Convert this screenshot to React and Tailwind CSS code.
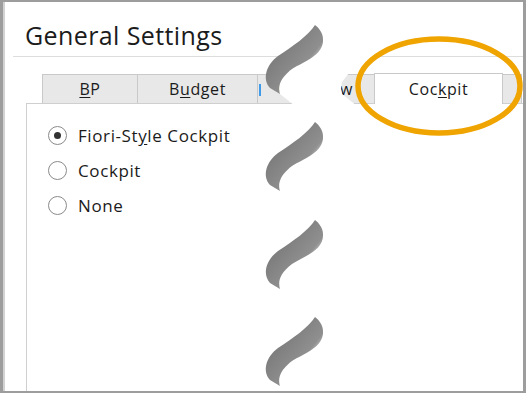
import React from 'react';

const font = { fontFamily: '"Open Sans", "Noto Sans", Arial, sans-serif' };

const tabs = [
  { label: 'BP', u: 0, w: 'w-[96px]' },
  { label: 'Budget', u: 1, w: 'w-[121px]' },
  { label: 'Overview', u: 4, w: 'w-[118px]' },
];

const radios = [
  { label: 'Fiori-Style Cockpit', u: 8, checked: true },
  { label: 'Cockpit', u: -1 },
  { label: 'None', u: -1 },
];

const Underlined = ({ text, u }) => {
  if (u < 0) return text;
  return (
    <>
      {text.slice(0, u)}
      <span className="underline underline-offset-2">{text[u]}</span>
      {text.slice(u + 1)}
    </>
  );
};

// torn-paper band drawn over the dialog
const periods = [-72, 25, 122, 220, 317];
const edge = [
  [315, 0], [322, 7], [323, 16], [315, 30], [300, 39], [287, 48], [280, 57], [279, 64], [280, 69],
];

const bandPoints = () => {
  const left = [];
  periods.forEach((t) => edge.forEach(([x, y]) => left.push([x, t + y])));
  const right = left.map(([x, y]) => [x + 62, y]).reverse();
  return [...left, ...right].map((p) => p.join(',')).join(' ');
};

const crescent = (t) =>
  `M315 ${t} C309 ${t + 10} 292 ${t + 22} 278 ${t + 31} C266 ${t + 40} 262 ${t + 54} 270 ${t + 63} L280 ${t + 69} C278 ${t + 62} 279 ${t + 54} 292 ${t + 44} C305 ${t + 36} 324 ${t + 30} 323 ${t + 14} C323 ${t + 8} 319 ${t + 3} 315 ${t} Z`;

const App = () => {
  return (
    <div
      className="relative w-[526px] h-[393px] overflow-hidden bg-white border-l-[3px] border-r-[3px] border-t-2 border-b-2 border-[#9d9d9d]"
      style={font}
    >
      <div className="h-full flex flex-col border-l-[2px] border-[#d2d2d2]">
        {/* Header */}
        <div className="pl-[20px] pt-[17px] h-[54px] text-[25px] tracking-[0.4px] leading-[32px] text-[#1b1b1b]">
          General Settings
        </div>
        <div className="ml-[8px] border-t border-[#dddddd]"></div>

        {/* Tabs + panel */}
        <div className="ml-[21px] mt-[12px] flex-1 flex flex-col">
          <div className="flex items-end h-[34px] pl-[17px] text-[16px] tracking-[0.6px] text-[#1b1b1b]">
            {tabs.map((t, i) => (
              <div
                key={t.label}
                className={`${t.w} h-[29px] -ml-px relative flex items-center justify-center bg-[#e8e8e8] border border-b-0 border-[#c9c9c9]`}
              >
                {i === 2 && <div className="absolute left-px top-[9px] w-[2px] h-[12px] bg-[#3d9be9]"></div>}
                <Underlined text={t.label} u={t.u} />
              </div>
            ))}
            <div className="w-[129px] h-[31px] -ml-px -mb-px relative z-10 flex items-center justify-center bg-white border border-b-0 border-[#c9c9c9]">
              <Underlined text="Cockpit" u={3} />
            </div>
            <div className="w-[20px] h-[29px] -ml-px bg-[#e8e8e8] border border-b-0 border-[#c9c9c9]"></div>
          </div>
          <div className="flex-1 border-l border-t border-[#cfcfcf] pl-[21px] pt-[22px] flex flex-col gap-[16px]">
            {radios.map((r) => (
              <div key={r.label} className="flex items-center h-[19px] gap-[11px] text-[17px] tracking-[0.6px] text-[#1b1b1b]">
                <div className="w-[19px] h-[19px] rounded-full border border-[#8a8a8a] bg-white flex items-center justify-center">
                  {r.checked && <div className="w-[7px] h-[7px] rounded-full bg-[#333333]"></div>}
                </div>
                <span>
                  <Underlined text={r.label} u={r.u} />
                </span>
              </div>
            ))}
          </div>
        </div>
      </div>

      {/* torn paper effect */}
      <svg className="absolute inset-0 pointer-events-none" width="521" height="391" viewBox="3 2 521 391">
        <defs>
          <linearGradient id="tear" x1="0.3" y1="0.35" x2="0.75" y2="0.8">
            <stop offset="0" stopColor="#7e7e7e" />
            <stop offset="0.65" stopColor="#8f8f8f" />
            <stop offset="1" stopColor="#f0f0f0" />
          </linearGradient>
        </defs>
        <polygon points={bandPoints()} fill="#ffffff" />
        {periods.map((t) => (
          <path key={t} d={crescent(t)} fill="url(#tear)" />
        ))}
      </svg>

      {/* annotation */}
      <svg className="absolute inset-0 pointer-events-none" width="521" height="391" viewBox="3 2 521 391">
        <ellipse cx="439" cy="86" rx="81" ry="47" fill="none" stroke="#efa400" strokeWidth="5.5" />
      </svg>
    </div>
  );
};

export default App;
